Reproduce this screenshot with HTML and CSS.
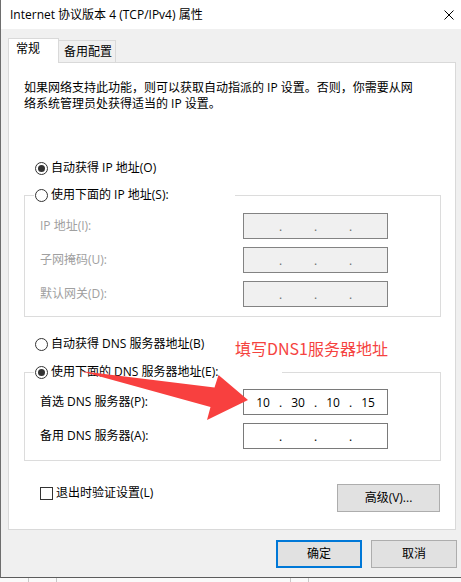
FILE: index.html
```html
<!DOCTYPE html>
<html lang="zh-CN">
<head>
<meta charset="utf-8">
<title>Internet 协议版本 4 (TCP/IPv4) 属性</title>
<link rel="stylesheet" href="styles.css">
</head>
<body>
<div class="window">
  <div class="titlebar">
    <span class="title">Internet 协议版本 4 (TCP/IPv4) 属性</span>
    <svg class="close" width="10" height="10" viewBox="0 0 10 10"><path d="M0.5 0.5L9.5 9.5M9.5 0.5L0.5 9.5" stroke="#000" stroke-width="1" fill="none"/></svg>
  </div>
  <div class="content">
    <div class="tabs">
      <div class="tab tab-active">常规</div>
      <div class="tab tab-alt">备用配置</div>
    </div>
    <div class="panel">
      <p class="desc">如果网络支持此功能，则可以获取自动指派的 IP 设置。否则，你需要从网<br>络系统管理员处获得适当的 IP 设置。</p>
      <div class="option option-first"><span class="radio radio-on"></span><span>自动获得 IP 地址(O)</span></div>
      <div class="group group-ip">
        <div class="legend legend-ip"><span class="radio"></span><span>使用下面的 IP 地址(S):</span></div>
        <div class="field field-disabled"><span class="label">IP 地址(I):</span><div class="ipbox ipbox-disabled"><span class="oct"></span><span class="dot">.</span><span class="oct"></span><span class="dot">.</span><span class="oct"></span><span class="dot">.</span><span class="oct"></span></div></div>
        <div class="field field-disabled"><span class="label">子网掩码(U):</span><div class="ipbox ipbox-disabled"><span class="oct"></span><span class="dot">.</span><span class="oct"></span><span class="dot">.</span><span class="oct"></span><span class="dot">.</span><span class="oct"></span></div></div>
        <div class="field field-disabled"><span class="label">默认网关(D):</span><div class="ipbox ipbox-disabled"><span class="oct"></span><span class="dot">.</span><span class="oct"></span><span class="dot">.</span><span class="oct"></span><span class="dot">.</span><span class="oct"></span></div></div>
      </div>
      <div class="option option-dns"><span class="radio"></span><span>自动获得 DNS 服务器地址(B)</span></div>
      <div class="group group-dns">
        <div class="legend legend-dns"><span class="radio radio-on"></span><span>使用下面的 DNS 服务器地址(E):</span></div>
        <div class="field"><span class="label">首选 DNS 服务器(P):</span><div class="ipbox"><span class="oct">10</span><span class="dot">.</span><span class="oct">30</span><span class="dot">.</span><span class="oct">10</span><span class="dot">.</span><span class="oct">15</span></div></div>
        <div class="field"><span class="label">备用 DNS 服务器(A):</span><div class="ipbox"><span class="oct"></span><span class="dot">.</span><span class="oct"></span><span class="dot">.</span><span class="oct"></span><span class="dot">.</span><span class="oct"></span></div></div>
      </div>
      <div class="extras">
        <div class="check"><span class="checkbox"></span><span>退出时验证设置(L)</span></div>
        <div class="btn btn-adv">高级(V)...</div>
      </div>
    </div>
    <div class="actions">
      <div class="btn btn-ok">确定</div>
      <div class="btn btn-cancel">取消</div>
    </div>
  </div>
</div>
<div class="desk">
  <span class="desk-cell desk-a"></span><span class="desk-cell desk-b"></span><span class="desk-cell desk-c"></span><span class="desk-cell desk-d"></span><span class="desk-cell desk-e"></span>
</div>
<svg class="arrow" width="461" height="582" viewBox="0 0 461 582"><polygon points="80,371 214.5,387.5 218.5,375 248,400 207,420 210.5,407" fill="#f8403f"/></svg>
<div class="note">填写DNS1服务器地址</div>
</body>
</html>
```
FILE: styles.css
```css
* { box-sizing: border-box; }
html, body { margin: 0; padding: 0; }
body {
  width: 461px;
  height: 582px;
  overflow: hidden;
  background: #fff;
  font-family: "Open Sans", "Noto Sans CJK SC", sans-serif;
  font-size: 12px;
  line-height: 16px;
  color: #000;
  position: relative;
}
.window {
  height: 578px;
  border-left: 1px solid #6e6e6e;
  border-bottom: 1px solid #5c5c5c;
  display: flex;
  flex-direction: column;
  background: #f0f0f0;
}
.titlebar {
  height: 29px;
  flex: none;
  background: #fff;
  display: flex;
  align-items: center;
  padding-left: 9px;
}
.title { color: #000; }
.close { margin-left: auto; margin-right: 7px; flex: none; }
.content {
  flex: 1;
  padding: 9px 5px 0 7px;
  display: flex;
  flex-direction: column;
}
.tabs {
  display: flex;
  align-items: flex-end;
  height: 24px;
  flex: none;
}
.tab {
  border: 1px solid #d9d9d9;
  border-bottom: none;
  white-space: nowrap;
}
.tab-active {
  width: 51px;
  height: 25px;
  margin-bottom: -1px;
  background: #fff;
  padding: 2px 0 0 7px;
  position: relative;
  z-index: 1;
}
.tab-alt {
  width: 57px;
  height: 22px;
  border-left: none;
  background: #f0f0f0;
  padding: 3px 0 0 5px;
}
.panel {
  background: #fff;
  border: 1px solid #d9d9d9;
  padding: 17px 0 17px 0;
  flex: none;
}
.desc {
  margin: 0 0 0 15px;
  white-space: nowrap;
}
.option {
  display: flex;
  align-items: center;
  height: 16px;
  padding-left: 26px;
  white-space: nowrap;
}
.option-first { margin-top: 48px; }
.option-dns { margin-top: 19px; }
.radio {
  width: 13px;
  height: 13px;
  flex: none;
  border: 1px solid #333;
  border-radius: 50%;
  background: #fff;
  margin-right: 3px;
  display: flex;
  align-items: center;
  justify-content: center;
}
.radio-on::after {
  content: "";
  width: 7px;
  height: 7px;
  border-radius: 50%;
  background: #333;
}
.group {
  border: 1px solid #dcdcdc;
  margin: 19px 14px 0 15px;
  padding: 0 0 9px 15px;
}
.group-dns { margin-top: 20px; padding-bottom: 11px; }
.legend {
  display: flex;
  align-items: center;
  height: 16px;
  margin: -9px 0 0 -6px;
  padding-left: 1px;
  background: #fff;
  white-space: nowrap;
}
.legend-ip { width: 201px; }
.legend-dns { width: 248px; }
.field {
  display: flex;
  align-items: center;
  height: 26px;
  margin-top: 8px;
  white-space: nowrap;
}
.legend + .field { margin-top: 10px; }
.group-dns .legend + .field { margin-top: 9px; }
.field-disabled .label { color: #a0a0a0; }
.label { width: 203px; flex: none; }
.ipbox {
  width: 145px;
  height: 26px;
  flex: none;
  border: 1px solid #7a7a7a;
  background: #fff;
  display: flex;
  align-items: center;
  padding-left: 5px;
  padding-top: 1px;
}
.ipbox-disabled {
  background: #f0f0f0;
  border-color: #838383;
  color: #6d6d6d;
}
.oct { width: 28px; text-align: center; flex: none; }
.dot { width: 7px; text-align: center; flex: none; }
.extras {
  display: flex;
  align-items: flex-start;
  justify-content: space-between;
  margin: 23px 15px 0 31px;
}
.check {
  display: flex;
  align-items: center;
  height: 16px;
  margin-top: 1px;
  white-space: nowrap;
}
.checkbox {
  width: 13px;
  height: 13px;
  border: 1px solid #333;
  background: #fff;
  margin-right: 3px;
  flex: none;
}
.btn {
  height: 28px;
  border: 1px solid #adadad;
  background: #e1e1e1;
  display: flex;
  align-items: center;
  justify-content: center;
  white-space: nowrap;
}
.btn-adv { width: 103px; }
.actions {
  display: flex;
  justify-content: flex-end;
  gap: 9px;
  margin: 10px -1px 0 0;
}
.btn-ok { width: 86px; border: 2px solid #0078d7; }
.btn-cancel { width: 86px; }
.desk {
  height: 4px;
  display: flex;
  background: #fafafa;
}
.desk-cell { height: 4px; flex: none; }
.desk-a { width: 28px; }
.desk-b { width: 28px; border-left: 1px solid #c8c8c8; }
.desk-c { width: 234px; border-left: 1px solid #c8c8c8; }
.desk-d { width: 18px; border-left: 1px solid #c8c8c8; }
.desk-e { width: 153px; border-left: 1px solid #c8c8c8; }
.arrow {
  position: absolute;
  left: 0;
  top: 0;
  pointer-events: none;
}
.note {
  position: absolute;
  left: 235px;
  top: 340px;
  font-family: "Noto Sans CJK SC", sans-serif;
  font-size: 16px;
  line-height: 16px;
  color: #f5433f;
  white-space: nowrap;
}
```
